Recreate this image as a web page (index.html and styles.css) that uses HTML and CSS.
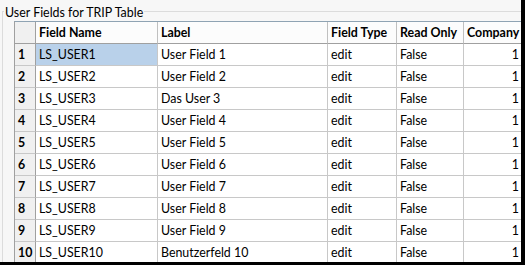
FILE: index.html
```html
<!DOCTYPE html>
<html lang="en">
<head>
<meta charset="utf-8">
<title>User Fields for TRIP Table</title>
<link rel="stylesheet" href="styles.css">
</head>
<body>
<div class="window">
  <section class="group">
    <h1 class="group-title">User Fields for TRIP Table</h1>
    <table class="grid">
      <thead>
        <tr>
          <th class="corner"></th>
          <th>Field Name</th>
          <th>Label</th>
          <th>Field Type</th>
          <th>Read Only</th>
          <th>Company</th>
        </tr>
      </thead>
      <tbody>
        <tr><th class="rownum">1</th><td class="selected">LS_USER1</td><td>User Field 1</td><td>edit</td><td>False</td><td class="num">1</td></tr>
        <tr><th class="rownum">2</th><td>LS_USER2</td><td>User Field 2</td><td>edit</td><td>False</td><td class="num">1</td></tr>
        <tr><th class="rownum">3</th><td>LS_USER3</td><td>Das User 3</td><td>edit</td><td>False</td><td class="num">1</td></tr>
        <tr><th class="rownum">4</th><td>LS_USER4</td><td>User Field 4</td><td>edit</td><td>False</td><td class="num">1</td></tr>
        <tr><th class="rownum">5</th><td>LS_USER5</td><td>User Field 5</td><td>edit</td><td>False</td><td class="num">1</td></tr>
        <tr><th class="rownum">6</th><td>LS_USER6</td><td>User Field 6</td><td>edit</td><td>False</td><td class="num">1</td></tr>
        <tr><th class="rownum">7</th><td>LS_USER7</td><td>User Field 7</td><td>edit</td><td>False</td><td class="num">1</td></tr>
        <tr><th class="rownum">8</th><td>LS_USER8</td><td>User Field 8</td><td>edit</td><td>False</td><td class="num">1</td></tr>
        <tr><th class="rownum">9</th><td>LS_USER9</td><td>User Field 9</td><td>edit</td><td>False</td><td class="num">1</td></tr>
        <tr><th class="rownum">10</th><td>LS_USER10</td><td>Benutzerfeld 10</td><td>edit</td><td>False</td><td class="num">1</td></tr>
      </tbody>
    </table>
  </section>
</div>
</body>
</html>
```

FILE: styles.css
```css
html, body {
  margin: 0;
  padding: 0;
  background: #000;
}

.window {
  width: 521px;
  height: 262px;
  overflow: hidden;
  background: #f7f7f7;
  font-family: Lato, "Liberation Sans", sans-serif;
  font-size: 12.4px;
  color: #000;
}

.group {
  margin: 11px 0 0 2px;
  height: 251px;
  border-top: 1px solid #dcdcdc;
  border-left: 1px solid #dcdcdc;
  padding-left: 11px;
}

.group-title {
  display: block;
  width: max-content;
  margin: -6px 0 0 -10px;
  padding: 0 1px;
  height: 14px;
  line-height: 14px;
  font-size: 12.4px;
  font-weight: normal;
  color: #000;
  background: #f7f7f7;
}

.grid {
  display: grid;
  grid-template-columns: 21px 122px 170px 69px 67px 58px;
  width: max-content;
  margin-top: 1px;
  border-collapse: separate;
  border-spacing: 0;
  border-top: 1px solid #8fa3b3;
  border-left: 1px solid #a0a0a0;
}

.grid thead,
.grid tbody,
.grid tr {
  display: contents;
}

.grid th,
.grid td {
  box-sizing: border-box;
  height: 22px;
  line-height: 21px;
  padding: 0 3px;
  border-right: 1px solid #c8c8c8;
  border-bottom: 1px solid #c8c8c8;
  text-align: left;
  white-space: nowrap;
  overflow: hidden;
  background: #fff;
  color: #000;
}

.grid thead th {
  font-weight: bold;
  background: #fcfcfc;
  border-bottom-color: #a0a0a0;
  border-right-color: #c0c0c0;
}

.grid th.rownum,
.grid th.corner {
  background: #f0f0f0;
  font-weight: bold;
  border-right-color: #a0a0a0;
}

.grid td.selected {
  background: #b9d1ea;
}

.grid td.num {
  text-align: right;
  padding-right: 2px;
}
```
